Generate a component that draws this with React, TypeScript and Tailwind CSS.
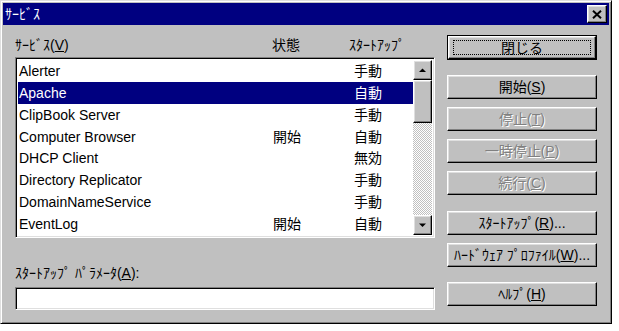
import React from "react";

const jp = "font-['Liberation_Sans','Noto_Sans_CJK_JP',sans-serif]";

type Row = { name: string; status: string; startup: string; selected?: boolean };

const rows: Row[] = [
  { name: "Alerter", status: "", startup: "手動" },
  { name: "Apache", status: "", startup: "自動", selected: true },
  { name: "ClipBook Server", status: "", startup: "手動" },
  { name: "Computer Browser", status: "開始", startup: "自動" },
  { name: "DHCP Client", status: "", startup: "無効" },
  { name: "Directory Replicator", status: "", startup: "手動" },
  { name: "DomainNameService", status: "", startup: "手動" },
  { name: "EventLog", status: "開始", startup: "自動" },
];

const raised =
  "bg-[#c0c0c0] border border-t-white border-l-white border-r-black border-b-black shadow-[inset_-1px_-1px_0_#808080,inset_1px_1px_0_#dfdfdf]";
const sunken =
  "border border-t-[#808080] border-l-[#808080] border-r-white border-b-white shadow-[inset_1px_1px_0_#000,inset_-1px_-1px_0_#dfdfdf]";

const Btn: React.FC<{ children: React.ReactNode; disabled?: boolean; className?: string }> = ({
  children,
  disabled,
  className = "",
}) => (
  <div
    className={`h-[24px] w-full flex items-center justify-center text-[14px] leading-none ${raised} ${
      disabled ? "text-[#808080] [text-shadow:1px_1px_0_#fff]" : "text-black"
    } ${className}`}
  >
    <span>{children}</span>
  </div>
);

const Arrow: React.FC<{ up?: boolean }> = ({ up }) => (
  <div className={`h-[20px] w-full flex items-center justify-center ${raised}`}>
    <svg width="8" height="5" viewBox="0 0 8 5">
      {up ? <polygon points="0,4 7,4 3.5,0.5" fill="#000" /> : <polygon points="0,0.5 7,0.5 3.5,4" fill="#000" />}
    </svg>
  </div>
);

export default function App() {
  return (
    <div className={`w-[619px] h-[331px] bg-white ${jp}`}>
      <div className="w-[612px] h-[324px] bg-[#c0c0c0] border border-t-[#dfdfdf] border-l-[#dfdfdf] border-r-black border-b-black shadow-[inset_1px_1px_0_#fff,inset_-1px_-1px_0_#808080] p-[2px] flex flex-col">
        {/* title bar */}
        <div className="h-[22px] bg-[#000080] flex items-center justify-between pl-[2px] pr-[2px]">
          <span className="text-white text-[14px] leading-none">ｻｰﾋﾞｽ</span>
          <div className={`w-[20px] h-[18px] flex items-center justify-center ${raised}`}>
            <svg width="10" height="9" viewBox="0 0 10 9">
              <path d="M1 0.8 L9 8.2 M9 0.8 L1 8.2" stroke="#000" strokeWidth="2" />
            </svg>
          </div>
        </div>

        <div className="flex flex-1">
          {/* left column */}
          <div className="ml-[12px] w-[420px] flex flex-col">
            <div className="h-[32px] flex items-end pb-[5px] text-[14px] leading-none text-black">
              <span className="w-[257px]">
                ｻｰﾋﾞｽ(<span className="underline">V</span>)
              </span>
              <span className="w-[77px]">状態</span>
              <span>ｽﾀｰﾄｱｯﾌﾟ</span>
            </div>
            <div className={`h-[181px] bg-white flex p-[2px] ${sunken}`}>
              <div className="flex-1 flex flex-col">
                {rows.map((r) => (
                  <div
                    key={r.name}
                    className={`h-[22px] flex items-center pl-[1px] text-[14px] leading-none ${
                      r.selected ? "bg-[#000080] text-white" : "text-black"
                    }`}
                  >
                    <span className="w-[254px]">{r.name}</span>
                    <span className="w-[81px]">{r.status}</span>
                    <span>{r.startup}</span>
                  </div>
                ))}
              </div>
              <div className="w-[19px] flex flex-col bg-[repeating-conic-gradient(#c0c0c0_0_25%,#fff_0_50%)] bg-[length:2px_2px]">
                <Arrow up />
                <div className={`h-[43px] w-full ${raised}`} />
                <div className="flex-1" />
                <Arrow />
              </div>
            </div>
            <div className="mt-[28px] text-[14px] leading-none text-black">
              ｽﾀｰﾄｱｯﾌﾟ ﾊﾟﾗﾒｰﾀ(<span className="underline">A</span>):
            </div>
            <div className={`mt-[7px] h-[23px] bg-white ${sunken}`} />
          </div>

          {/* right column */}
          <div className="ml-[12px] w-[150px] flex flex-col pt-[10px]">
            <div className="h-[25px] border border-black">
              <div className={`h-full flex items-center justify-center text-[14px] leading-none ${raised}`}>
                <div className="w-[138px] h-[15px] border border-dotted border-black flex items-center justify-center">
                  閉じる
                </div>
              </div>
            </div>
            <Btn className="mt-[15px]">
              開始(<span className="underline">S</span>)
            </Btn>
            <Btn disabled className="mt-[8px]">
              停止(<span className="underline">T</span>)
            </Btn>
            <Btn disabled className="mt-[8px]">
              一時停止(<span className="underline">P</span>)
            </Btn>
            <Btn disabled className="mt-[8px]">
              続行(<span className="underline">C</span>)
            </Btn>
            <Btn className="mt-[16px]">
              ｽﾀｰﾄｱｯﾌﾟ(<span className="underline">R</span>)...
            </Btn>
            <Btn className="mt-[8px]">
              ﾊｰﾄﾞｳｪｱ ﾌﾟﾛﾌｧｲﾙ(<span className="underline">W</span>)...
            </Btn>
            <Btn className="mt-[15px]">
              ﾍﾙﾌﾟ(<span className="underline">H</span>)
            </Btn>
          </div>
        </div>
      </div>
    </div>
  );
}
